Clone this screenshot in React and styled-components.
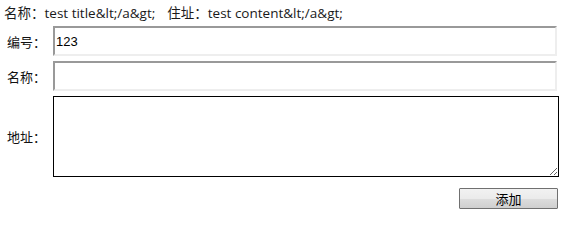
import React from "react";
import styled, { createGlobalStyle } from "styled-components";

const Global = createGlobalStyle`
  html, body { margin: 0; padding: 0; background: #fff; }
  body {
    font-family: "Open Sans", "Noto Sans CJK SC", sans-serif;
    font-size: 13px;
    color: #111;
  }
`;

const Page = styled.div`
  padding: 4px 18px 0 4px;
  width: 576px;
  box-sizing: border-box;
`;

const Info = styled.div`
  height: 18px;
  line-height: 18px;
  margin-bottom: 4px;
  white-space: pre;
  color: #1a1a1a;
  font-size: 13.5px;
`;

const Gap = styled.span`
  display: inline-block;
  width: 12px;
`;

const Form = styled.div`
  display: grid;
  grid-template-columns: 49px 1fr;
  row-gap: 5px;
  align-items: center;
`;

const Label = styled.label`
  text-align: right;
  padding-right: 7px;
  white-space: nowrap;
`;

const Field = styled.input`
  box-sizing: border-box;
  width: 504px;
  height: 30px;
  margin: 0;
  padding: 0 1px;
  border-style: solid;
  border-width: 2px;
  border-color: #999 #eee #eee #999;
  font-family: "Liberation Sans", Arial, sans-serif;
  font-size: 13px;
  color: #000;
  outline: none;
  background: #fff;
`;

const Area = styled.textarea`
  box-sizing: border-box;
  width: 506px;
  height: 81px;
  margin: 0;
  padding: 2px;
  border: 1px solid #000;
  font: inherit;
  outline: none;
  background: #fff;
  display: block;
`;

const Actions = styled.div`
  display: flex;
  justify-content: flex-end;
  margin-top: 11px;
`;

const Button = styled.button`
  box-sizing: border-box;
  width: 99px;
  height: 21px;
  margin: 0;
  padding: 0;
  border: 1px solid #707070;
  border-radius: 1px;
  background: linear-gradient(#f2f2f2, #ebebeb 50%, #dddddd 51%, #cfcfcf);
  font-family: "Noto Sans CJK SC", sans-serif;
  font-size: 13px;
  line-height: 19px;
  color: #000;
`;

export default function App() {
  return (
    <>
      <Global />
      <Page>
        <Info>
          名称：test title&amp;lt;/a&amp;gt;<Gap />住址：test content&amp;lt;/a&amp;gt;
        </Info>
        <Form>
          <Label>编号：</Label>
          <Field defaultValue="123" />
          <Label>名称：</Label>
          <Field defaultValue="" />
          <Label>地址：</Label>
          <Area />
        </Form>
        <Actions>
          <Button>添加</Button>
        </Actions>
      </Page>
    </>
  );
}
